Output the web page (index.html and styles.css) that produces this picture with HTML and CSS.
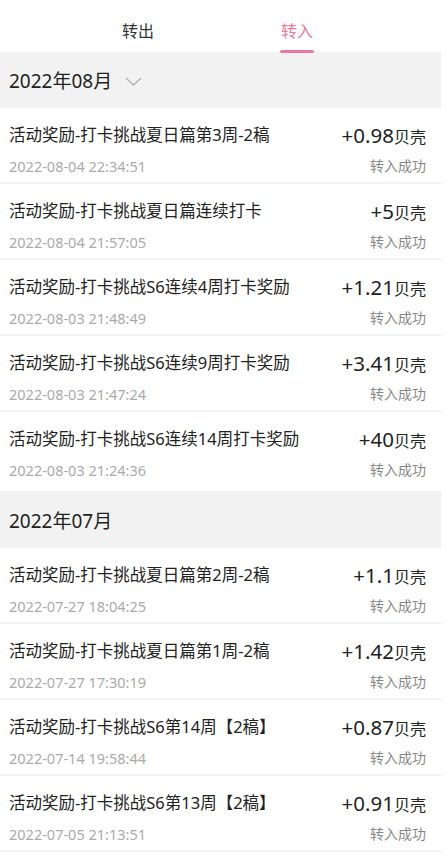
FILE: index.html
```html
<!DOCTYPE html>
<html lang="zh">
<head>
<meta charset="utf-8">
<title>贝壳明细</title>
<link rel="stylesheet" href="styles.css">
</head>
<body>
<div class="page">
  <div class="tabs">
    <div class="tab">转出</div>
    <div class="tab active">转入</div>
  </div>

  <section class="group">
    <div class="month">
      <span class="month-text">2022年08月</span>
      <svg class="chevron" width="17" height="9" viewBox="0 0 17 9"><polyline points="1,1 8.5,8 16,1" fill="none" stroke="#b0b0b0" stroke-width="1.3"/></svg>
    </div>
    <div class="row">
      <div class="left"><div class="title">活动奖励-打卡挑战夏日篇第3周-2稿</div><div class="date">2022-08-04 22:34:51</div></div>
      <div class="right"><div class="amount">+0.98<span class="unit">贝壳</span></div><div class="status">转入成功</div></div>
    </div>
    <div class="row">
      <div class="left"><div class="title">活动奖励-打卡挑战夏日篇连续打卡</div><div class="date">2022-08-04 21:57:05</div></div>
      <div class="right"><div class="amount">+5<span class="unit">贝壳</span></div><div class="status">转入成功</div></div>
    </div>
    <div class="row">
      <div class="left"><div class="title">活动奖励-打卡挑战S6连续4周打卡奖励</div><div class="date">2022-08-03 21:48:49</div></div>
      <div class="right"><div class="amount">+1.21<span class="unit">贝壳</span></div><div class="status">转入成功</div></div>
    </div>
    <div class="row">
      <div class="left"><div class="title">活动奖励-打卡挑战S6连续9周打卡奖励</div><div class="date">2022-08-03 21:47:24</div></div>
      <div class="right"><div class="amount">+3.41<span class="unit">贝壳</span></div><div class="status">转入成功</div></div>
    </div>
    <div class="row last">
      <div class="left"><div class="title">活动奖励-打卡挑战S6连续14周打卡奖励</div><div class="date">2022-08-03 21:24:36</div></div>
      <div class="right"><div class="amount">+40<span class="unit">贝壳</span></div><div class="status">转入成功</div></div>
    </div>
  </section>

  <section class="group">
    <div class="month month-2">
      <span class="month-text">2022年07月</span>
    </div>
    <div class="row">
      <div class="left"><div class="title">活动奖励-打卡挑战夏日篇第2周-2稿</div><div class="date">2022-07-27 18:04:25</div></div>
      <div class="right"><div class="amount">+1.1<span class="unit">贝壳</span></div><div class="status">转入成功</div></div>
    </div>
    <div class="row">
      <div class="left"><div class="title">活动奖励-打卡挑战夏日篇第1周-2稿</div><div class="date">2022-07-27 17:30:19</div></div>
      <div class="right"><div class="amount">+1.42<span class="unit">贝壳</span></div><div class="status">转入成功</div></div>
    </div>
    <div class="row">
      <div class="left"><div class="title">活动奖励-打卡挑战S6第14周【2稿】</div><div class="date">2022-07-14 19:58:44</div></div>
      <div class="right"><div class="amount">+0.87<span class="unit">贝壳</span></div><div class="status">转入成功</div></div>
    </div>
    <div class="row">
      <div class="left"><div class="title">活动奖励-打卡挑战S6第13周【2稿】</div><div class="date">2022-07-05 21:13:51</div></div>
      <div class="right"><div class="amount">+0.91<span class="unit">贝壳</span></div><div class="status">转入成功</div></div>
    </div>
  </section>
</div>
</body>
</html>
```

FILE: styles.css
```css
* { box-sizing: border-box; }
html, body { margin: 0; padding: 0; background: #fff; }
body {
  font-family: "Noto Sans", "Noto Sans CJK SC", sans-serif;
  color: #222;
}
.page {
  width: 441px;
  background: #fff;
  overflow: hidden;
}
.tabs {
  height: 52px;
  display: flex;
  justify-content: center;
  gap: 95px;
  padding-right: 6px;
}
.tab {
  width: 64px;
  text-align: center;
  font-size: 16px;
  line-height: 22px;
  padding-top: 20px;
  color: #333;
  position: relative;
}
.tab.active { color: #e97a9c; }
.tab.active::after {
  content: "";
  position: absolute;
  left: 15px;
  right: 15px;
  bottom: -1px;
  height: 3px;
  border-radius: 2px;
  background: #e97a9c;
}
.month {
  height: 56px;
  background: #f2f2f2;
  display: flex;
  align-items: center;
  padding-left: 9px;
}
.month-2 { height: 57px; }
.month-text {
  font-size: 19px;
  line-height: 26px;
  height: 26px;
  color: #222;
  margin-top: 2px;
}
.chevron { margin-left: 13px; margin-top: 2px; }
.group .row.last { height: 79px; border-bottom: 0; }
.row {
  height: 76px;
  display: flex;
  justify-content: space-between;
  padding: 15px 15px 0 9px;
  border-bottom: 2px solid #f4f4f4;
}
.title {
  font-size: 16.5px;
  line-height: 24px;
  height: 24px;
  color: #222;
  white-space: nowrap;
}
.date {
  margin-top: 9px;
  font-size: 14.5px;
  line-height: 20px;
  height: 20px;
  color: #aaa;
}
.right { text-align: right; }
.amount {
  font-size: 20.5px;
  line-height: 24px;
  height: 24px;
  color: #222;
  white-space: nowrap;
}
.unit { font-size: 16px; line-height: 24px; }
.status {
  margin-top: 9px;
  font-size: 14px;
  line-height: 20px;
  height: 20px;
  color: #888;
}
```
